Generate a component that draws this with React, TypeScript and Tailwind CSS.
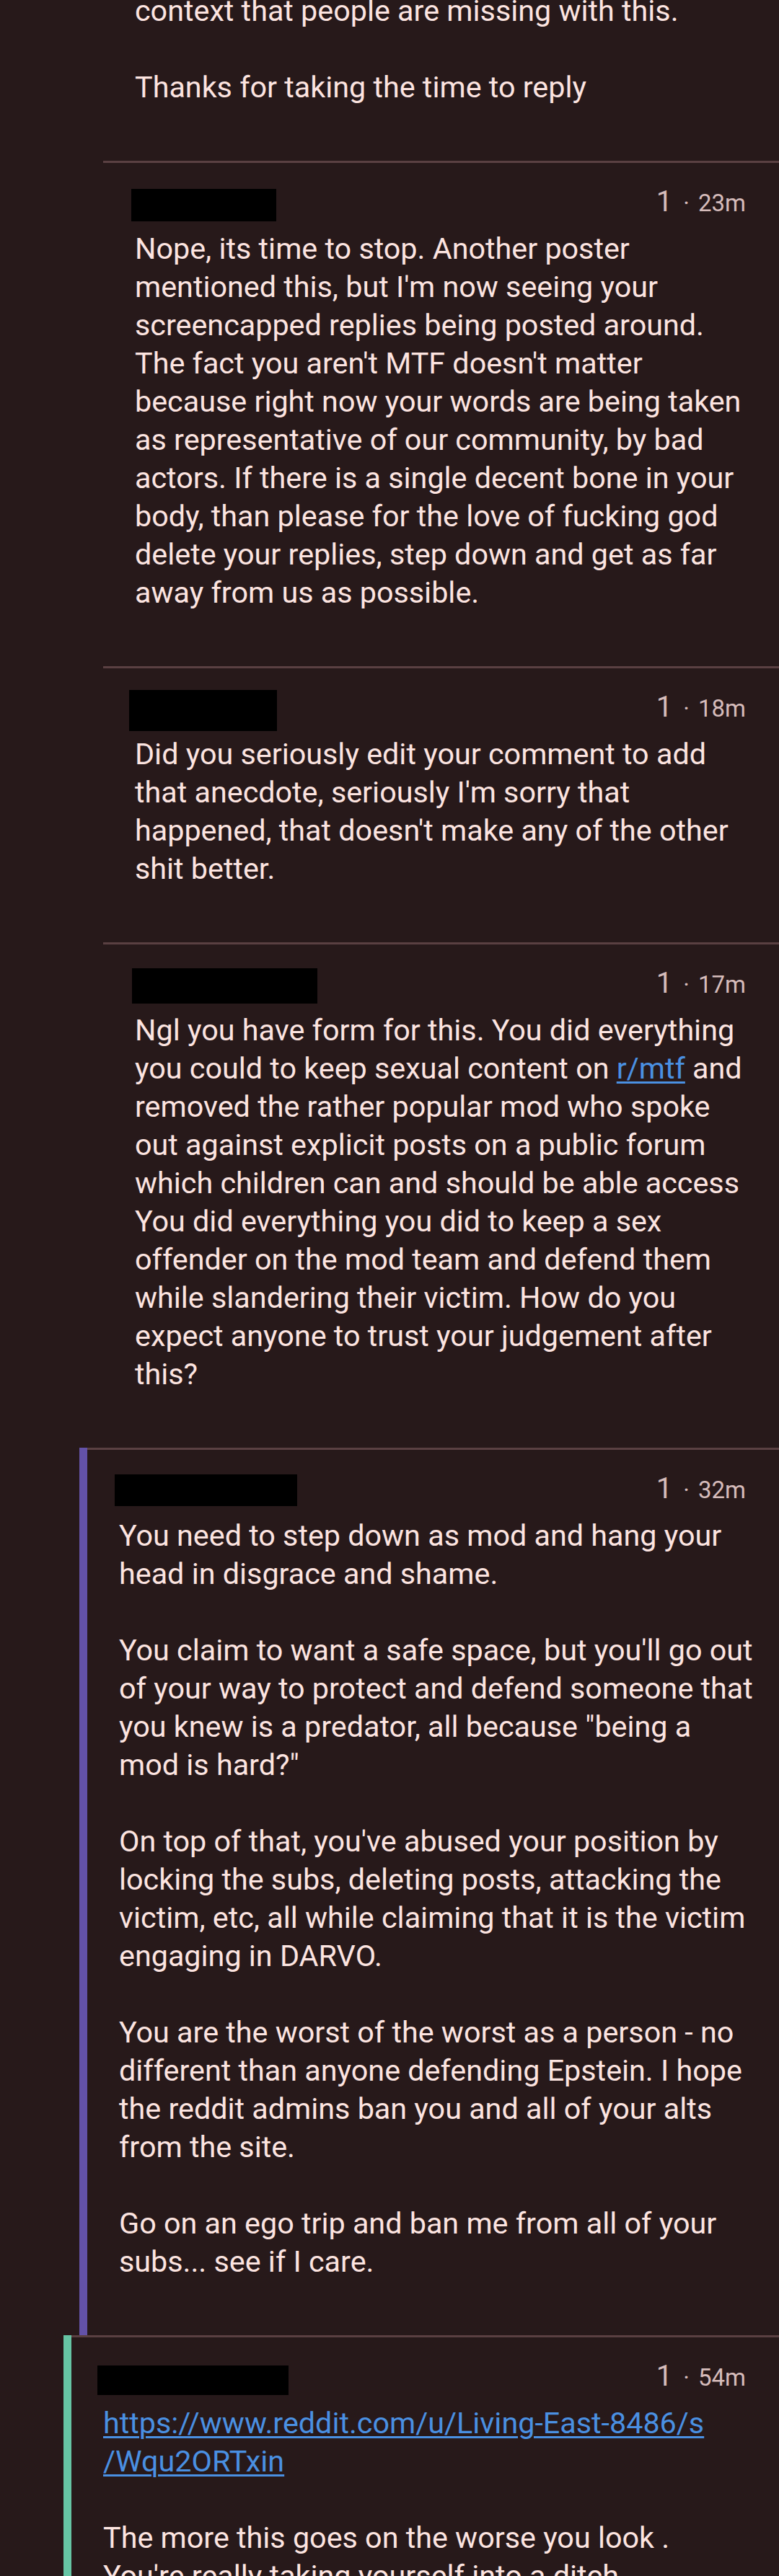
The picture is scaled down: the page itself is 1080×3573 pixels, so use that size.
import React from "react";

type Item = {
  depth: 1 | 2 | 3;
  bar: string;
  redact: string;
  score: string;
  time: string;
  body: React.ReactNode;
};

const indent = { 1: "ml-[88px]", 2: "ml-[110px]", 3: "ml-[132px]" };

const linkCls = "text-[#4a90e2] underline decoration-[3px] underline-offset-[4px]";

const comments: Item[] = [
  {
    depth: 3,
    bar: "bg-transparent",
    redact: "-ml-[5px] mt-[2px] w-[201px] h-[45px]",
    score: "1",
    time: "23m",
    body: (
      <p>
        Nope, its time to stop. Another poster mentioned this, but I'm now seeing your screencapped replies being
        posted around. The fact you aren't MTF doesn't matter because right now your words are being taken as
        representative of our community, by bad actors. If there is a single decent bone in your body, than please
        for the love of fucking god delete your replies, step down and get as far away from us as possible.
      </p>
    ),
  },
  {
    depth: 3,
    bar: "bg-transparent",
    redact: "-ml-[8px] -mt-[4px] w-[205px] h-[57px]",
    score: "1",
    time: "18m",
    body: (
      <p>
        Did you seriously edit your comment to add that anecdote, seriously I'm sorry that happened, that doesn't
        make any of the other shit better.
      </p>
    ),
  },
  {
    depth: 3,
    bar: "bg-transparent",
    redact: "-ml-[4px] -mt-[1px] w-[257px] h-[49px]",
    score: "1",
    time: "17m",
    body: (
      <p>
        Ngl you have form for this. You did everything you could to keep sexual content on{" "}
        <a className={linkCls}>r/mtf</a> and removed the rather popular mod who spoke out against explicit posts on
        a public forum which children can and should be able access You did everything you did to keep a sex
        offender on the mod team and defend them while slandering their victim. How do you expect anyone to trust
        your judgement after this?
      </p>
    ),
  },
  {
    depth: 2,
    bar: "bg-[#6352a8]",
    redact: "-ml-[6px] mt-0 w-[253px] h-[44px]",
    score: "1",
    time: "32m",
    body: (
      <div className="space-y-[53px]">
        <p>You need to step down as mod and hang your head in disgrace and shame.</p>
        {/* this one wraps a hair wider than the app did, so break it by hand */}
        <p className="-mr-[16px]">
          You claim to want a safe space, but you'll go out
          <br />
          of your way to protect and defend someone that
          <br />
          you knew is a predator, all because "being a
          <br />
          mod is hard?"
        </p>
        <p>
          On top of that, you've abused your position by locking the subs, deleting posts, attacking the victim,
          etc, all while claiming that it is the victim engaging in DARVO.
        </p>
        <p>
          You are the worst of the worst as a person - no different than anyone defending Epstein. I hope the reddit
          admins ban you and all of your alts from the site.
        </p>
        <p>Go on an ego trip and ban me from all of your subs... see if I care.</p>
      </div>
    ),
  },
  {
    depth: 1,
    bar: "bg-[#66c4a4]",
    redact: "-ml-[8px] mt-[5px] w-[265px] h-[41px]",
    score: "1",
    time: "54m",
    body: (
      <div className="space-y-[53px]">
        <p>
          <a className={linkCls}>
            https://www.reddit.com/u/Living-East-8486/s
            <wbr />
            /Wqu2ORTxin
          </a>
        </p>
        <p>
          The more this goes on the worse you look .
          <br />
          You're really taking yourself into a ditch.
        </p>
      </div>
    ),
  },
];

function Row({ depth, bar, children }: { depth: 1 | 2 | 3; bar: string; children: React.ReactNode }) {
  return (
    <div className={`flex ${indent[depth]}`}>
      <div className={`w-[11px] shrink-0 ${bar}`} />
      {children}
    </div>
  );
}

function Comment({ item }: { item: Item }) {
  return (
    <Row depth={item.depth} bar={item.bar}>
      <div className="flex-1 min-w-0 border-t-[3px] border-[#5a4042] pl-[44px] pr-[46px] pt-[34px] pb-[75px]">
        <div className="flex h-[43px] items-start justify-between">
          <div className={`bg-black ${item.redact}`} />
          <div className="flex items-baseline text-[#d6bcbb] leading-[40px]">
            <span className="text-[40px]">{item.score}</span>
            <span className="ml-[15px] text-[33px]">·</span>
            <span className="ml-[12px] text-[33px]">{item.time}</span>
          </div>
        </div>
        <div className="mt-[16px] -mr-[8px] break-words">{item.body}</div>
      </div>
    </Row>
  );
}

export default function App() {
  return (
    <div className="min-h-screen overflow-hidden bg-[#27191a] font-[family-name:Roboto,sans-serif] text-[41.3px] leading-[53px] text-[#fce4e0]">
      <Row depth={3} bar="bg-transparent">
        <div className="flex-1 min-w-0 pl-[44px] pr-[46px] pb-[75px]">
          <div className="-mt-[11px] space-y-[53px]">
            <p>context that people are missing with this.</p>
            <p>Thanks for taking the time to reply</p>
          </div>
        </div>
      </Row>
      {comments.map((c, i) => (
        <Comment key={i} item={c} />
      ))}
    </div>
  );
}
